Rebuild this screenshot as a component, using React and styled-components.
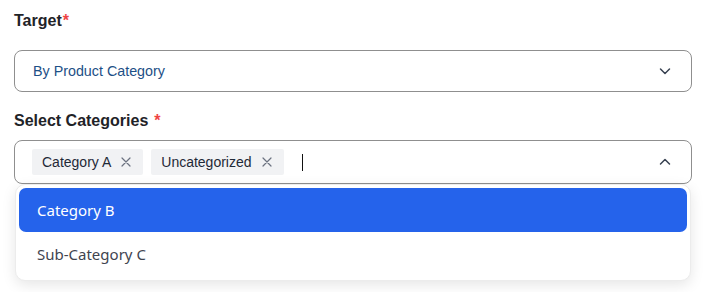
import React from "react";
import styled, { createGlobalStyle } from "styled-components";

const Global = createGlobalStyle`
  html, body { margin: 0; padding: 0; background: #ffffff; }
  body { font-family: "Liberation Sans", Arial, sans-serif; }
  * { box-sizing: border-box; }
`;

const Page = styled.div`
  width: 706px;
  height: 292px;
  padding: 11px 14px 0 14px;
  display: flex;
  flex-direction: column;
  background: #fff;
`;

const Field = styled.div`
  display: flex;
  flex-direction: column;
  margin-top: ${(p) => p.$before || 0}px;
  position: relative;
`;

const Label = styled.div`
  font-family: "Liberation Sans", Arial, sans-serif;
  font-weight: 700;
  font-size: 16px;
  line-height: 20px;
  color: #1f2328;
  margin-bottom: ${(p) => p.$gap}px;
  display: flex;
  gap: ${(p) => (p.$spaced ? 6 : 1)}px;
`;

const Star = styled.span`
  color: #ef4444;
`;

const SelectBox = styled.div`
  height: ${(p) => p.$h}px;
  border: 1px solid #8f8f8f;
  border-radius: 8px;
  display: flex;
  align-items: center;
  padding: 0 20px 0 ${(p) => p.$pl}px;
  background: #fff;
`;

const Value = styled.span`
  flex: 1;
  font-size: 14.3px;
  color: #1d4f86;
`;

const Chips = styled.div`
  flex: 1;
  display: flex;
  align-items: center;
  gap: 8px;
`;

const Chip = styled.span`
  height: 26px;
  display: inline-flex;
  align-items: center;
  gap: 10px;
  padding: 0 12px 0 10px;
  background: #f1f2f4;
  border-radius: 2px;
  font-size: 14px;
  color: #1f2937;
`;

const Remove = styled.svg`
  width: 10px;
  height: 10px;
  flex: none;
`;

const Caret = styled.span`
  width: 1px;
  height: 17px;
  background: #111;
  margin-left: 10px;
`;

const Chevron = styled.svg`
  width: 12px;
  height: 12px;
  flex: none;
`;

const Menu = styled.div`
  position: absolute;
  left: 1px;
  right: 1px;
  top: 100%;
  background: #fff;
  border-radius: 10px;
  border: 1px solid #ececec;
  box-shadow: 0 4px 14px rgba(0, 0, 0, 0.1);
  padding: 3px 3px 4px 3px;
  display: flex;
  flex-direction: column;
`;

const Option = styled.div`
  height: 44px;
  display: flex;
  align-items: center;
  padding: 0 18px;
  border-radius: 7px;
  font-family: "Noto Sans", "Open Sans", sans-serif;
  font-size: 15px;
  background: ${(p) => (p.$active ? "#2563eb" : "transparent")};
  color: ${(p) => (p.$active ? "#ffffff" : "#3f4450")};
`;

const X = () => (
  <Remove viewBox="0 0 10 10" fill="none" stroke="#6b7280" strokeWidth="1.2" strokeLinecap="round">
    <path d="M1 1 L9 9 M9 1 L1 9" />
  </Remove>
);

const ChevronIcon = ({ up }) => (
  <Chevron viewBox="0 0 12 12" fill="none" stroke="#374151" strokeWidth="1.5" strokeLinecap="round" strokeLinejoin="round">
    <path d={up ? "M1.5 8 L6 3.5 L10.5 8" : "M1.5 4 L6 8.5 L10.5 4"} />
  </Chevron>
);

export default function App() {
  return (
    <>
      <Global />
      <Page>
        <Field>
          <Label $gap={19}>
            <span>Target</span>
            <Star>*</Star>
          </Label>
          <SelectBox $h={42} $pl={18}>
            <Value>By Product Category</Value>
            <ChevronIcon />
          </SelectBox>
        </Field>
        <Field $before={19}>
          <Label $gap={9} $spaced>
            <span>Select Categories</span>
            <Star>*</Star>
          </Label>
          <Field>
            <SelectBox $h={44} $pl={17}>
              <Chips>
                <Chip>
                  Category A
                  <X />
                </Chip>
                <Chip>
                  Uncategorized
                  <X />
                </Chip>
                <Caret />
              </Chips>
              <ChevronIcon up />
            </SelectBox>
            <Menu>
              <Option $active>Category B</Option>
              <Option>Sub-Category C</Option>
            </Menu>
          </Field>
        </Field>
      </Page>
    </>
  );
}
